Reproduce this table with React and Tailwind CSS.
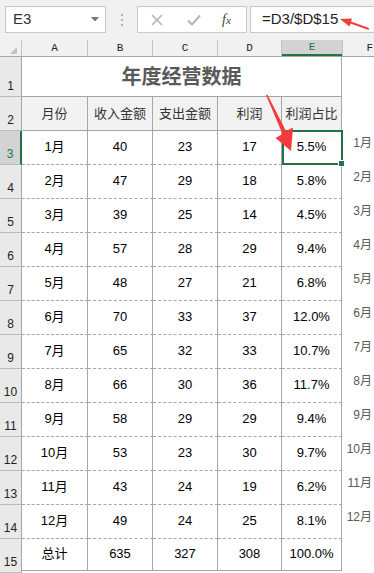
import React from 'react';

const rows = [
  ['1月', 40, 23, 17, '5.5%'],
  ['2月', 47, 29, 18, '5.8%'],
  ['3月', 39, 25, 14, '4.5%'],
  ['4月', 57, 28, 29, '9.4%'],
  ['5月', 48, 27, 21, '6.8%'],
  ['6月', 70, 33, 37, '12.0%'],
  ['7月', 65, 32, 33, '10.7%'],
  ['8月', 66, 30, 36, '11.7%'],
  ['9月', 58, 29, 29, '9.4%'],
  ['10月', 53, 23, 30, '9.7%'],
  ['11月', 43, 24, 19, '6.2%'],
  ['12月', 49, 24, 25, '8.1%'],
  ['总计', 635, 327, 308, '100.0%'],
];

const widths = ['w-[66px]', 'w-[65px]', 'w-[65px]', 'w-[64px]', 'w-[60px]'];
const letters = ['A', 'B', 'C', 'D', 'E'];

const font = { fontFamily: '"Liberation Sans", "Noto Sans CJK SC", sans-serif' };

const RowHead = ({ n, active, h }) => (
  <div
    className={`w-[22px] shrink-0 ${h} flex items-end justify-center pb-[1px] text-[12px] border-b border-[#bcbcbc] ${
      active
        ? 'bg-[#d3d3d3] text-[#217346] border-r-2 border-r-[#217346]'
        : 'bg-[#e9e9e9] text-[#222] border-r border-r-[#a6a6a6]'
    }`}
  >
    {n}
  </div>
);

const Arrows = () => (
  <svg className="absolute inset-0 pointer-events-none" width="374" height="573">
    <polygon points="340,19 352,18.5 351,21.6 369,28 368.5,30 350.4,23.6 349.5,26.5" fill="#f23b3b" />
    <polygon points="266,95 267.5,94.7 286,131 293,127.5 291,151 275.5,138 282.5,134" fill="#f23b3b" />
  </svg>
);

export default function App() {
  return (
    <div className="relative w-[374px] h-[573px] overflow-hidden bg-white text-black" style={font}>
      {/* formula bar */}
      <div className="h-[40px] bg-[#f1f1f1] flex items-start pt-[6px]">
        <div className="ml-[5px] w-[101px] h-[27px] bg-white border border-[#c8c8c8] flex items-center justify-between pl-[7px] pr-[6px] text-[15px] text-[#333]">
          <span>E3</span>
          <svg width="8" height="5" viewBox="0 0 8 5">
            <polygon points="0,0 8,0 4,4.5" fill="#777" />
          </svg>
        </div>
        <div className="w-[31px] h-[27px] flex flex-col items-center justify-center gap-[3px]">
          <span className="w-[2px] h-[2px] bg-[#b0b0b0]" />
          <span className="w-[2px] h-[2px] bg-[#b0b0b0]" />
          <span className="w-[2px] h-[2px] bg-[#b0b0b0]" />
        </div>
        <div className="w-[110px] h-[27px] bg-white border border-[#c8c8c8] flex items-center">
          <svg className="ml-[13px]" width="12" height="12" viewBox="0 0 12 12">
            <path d="M1 1 L11 11 M11 1 L1 11" stroke="#b5b5b5" strokeWidth="1.6" />
          </svg>
          <svg className="ml-[24px]" width="14" height="12" viewBox="0 0 14 12">
            <path d="M1 6.5 L5 10.5 L13 1.5" stroke="#b5b5b5" strokeWidth="2" fill="none" />
          </svg>
          <span
            className="ml-[21px] text-[14px] italic text-[#444]"
            style={{ fontFamily: '"Liberation Serif", serif' }}
          >
            f<span className="text-[11px]">x</span>
          </span>
        </div>
        <div className="ml-[3px] flex-1 h-[27px] bg-white border border-r-0 border-[#c8c8c8] flex items-center pl-[11px] text-[15px] text-[#222]">
          =D3/$D$15
        </div>
      </div>

      {/* column headers */}
      <div className="h-[17px] flex bg-[#f1f1f1] border-b border-[#a6a6a6]">
        <div className="w-[22px] shrink-0 border-r border-[#c4c4c4] flex items-end justify-end pr-[4px] pb-[2px]">
          <svg width="7" height="7" viewBox="0 0 7 7">
            <polygon points="7,0 7,7 0,7" fill="#c2c2c2" />
          </svg>
        </div>
        {letters.map((l, i) => (
          <div
            key={l}
            className={`${widths[i]} shrink-0 flex items-center justify-center text-[11px] ${
              i === 4
                ? 'bg-[#d3d3d3] border-b-2 border-[#217346] text-[#217346]'
                : 'border-r border-[#c4c4c4] text-[#222]'
            }`}
            style={{ fontFamily: '"Liberation Mono", monospace' }}
          >
            {l}
          </div>
        ))}
        <div
          className="flex-1 flex items-center justify-end pr-[1px] text-[11px] text-[#222] border-l border-[#c4c4c4]"
          style={{ fontFamily: '"Liberation Mono", monospace' }}
        >
          F
        </div>
      </div>

      {/* row 1: title */}
      <div className="flex h-[40px]">
        <RowHead n={1} h="h-[40px]" />
        <div className="w-[320px] shrink-0 border-r border-b border-[#a6a6a6] flex items-center justify-center text-[20px] font-bold text-[#595959]">
          年度经营数据
        </div>
        <div className="flex-1" />
      </div>

      {/* row 2: header */}
      <div className="flex h-[34px]">
        <RowHead n={2} h="h-[34px]" />
        {['月份', '收入金额', '支出金额', '利润', '利润占比'].map((t, i) => (
          <div
            key={t}
            className={`${widths[i]} shrink-0 bg-[#f2f2f2] border-r border-b border-[#a6a6a6] flex items-center justify-center text-[13px] text-[#333]`}
          >
            {t}
          </div>
        ))}
        <div className="flex-1" />
      </div>

      {/* data rows */}
      {rows.map((r, ri) => {
        const last = ri === rows.length - 1;
        return (
          <div key={ri} className="flex h-[34px]">
            <RowHead n={ri + 3} active={ri === 0} h="h-[34px]" />
            {r.map((v, ci) => (
              <div
                key={ci}
                className={`${widths[ci]} shrink-0 border-r border-b border-[#a6a6a6] flex items-center justify-center pb-[2px] text-[13px] ${
                  last ? 'mb-[2px]' : '[border-bottom-style:dashed]'
                }`}
              >
                {v}
              </div>
            ))}
            <div className="flex-1 relative">
              {!last && (
                <span className="absolute right-[2px] top-[3px] whitespace-nowrap text-[12px] text-[#595959]">
                  {r[0]}
                </span>
              )}
            </div>
          </div>
        );
      })}

      {/* selection on E3 */}
      <div className="absolute left-[282px] top-[130px] w-[61px] h-[35px] border-2 border-[#217346] pointer-events-none">
        <div className="absolute right-[-4px] bottom-[-4px] w-[5px] h-[5px] bg-[#217346] border border-white box-content" />
      </div>

      <Arrows />
    </div>
  );
}
